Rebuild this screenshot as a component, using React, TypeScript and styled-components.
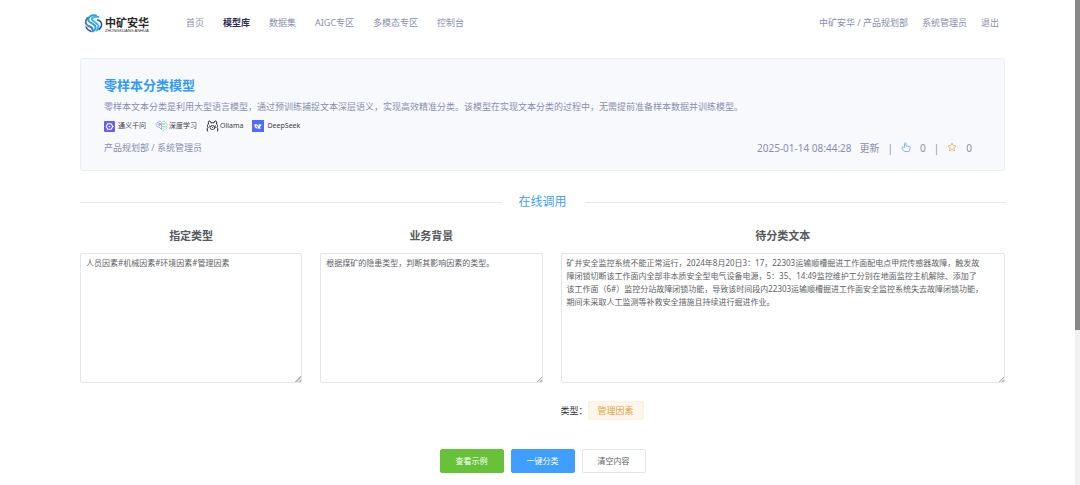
import React from 'react';
import styled, { createGlobalStyle, css } from 'styled-components';

const GlobalStyle = createGlobalStyle`
  *, *::before, *::after { box-sizing: border-box; }
  body {
    margin: 0;
    background: #fff;
    color: #606266;
    font-family: "Noto Sans", "Noto Sans CJK SC", sans-serif;
    font-size: 9px;
  }
  h1, h2, h3, p { margin: 0; }
  a { color: inherit; text-decoration: none; }
  button, textarea { font-family: inherit; }
`;

const Page = styled.div`
  padding: 0 75px 12px 80px;
`;

const Header = styled.header`
  display: flex;
  align-items: center;
  height: 46px;
  padding: 0 6px 0 4px;
  color: #8a8eb0;
  line-height: 16px;
`;

const Brand = styled.a`
  display: flex;
  align-items: center;
  gap: 2px;
  width: 102px;
  color: #2a2829;
`;

const BrandText = styled.span`
  display: flex;
  flex-direction: column;
  padding-top: 2px;
`;

const BrandName = styled.span`
  font-size: 11px;
  font-weight: 700;
  line-height: 13px;
`;

const BrandLatin = styled.span`
  font-family: "Liberation Sans", sans-serif;
  font-size: 4px;
  line-height: 4px;
  white-space: nowrap;
`;

const Nav = styled.nav`
  display: flex;
  flex: 1;
  gap: 19px;
`;

const NavLink = styled.a<{ $active?: boolean }>`
  ${({ $active }) =>
    $active &&
    css`
      color: #2f2b57;
      font-weight: 700;
    `}
`;

const Account = styled.div`
  display: flex;
  gap: 14px;
`;

const Card = styled.section`
  margin-top: 12px;
  padding: 15px 32px 12px 23px;
  border: 1px solid #ebeef5;
  border-radius: 3px;
  background: #f8f9fd;
  color: #8a8eb0;
`;

const Title = styled.h1`
  color: #2f9bff;
  font-size: 13px;
  line-height: 22px;
`;

const Description = styled.p`
  line-height: 22px;
`;

const Tags = styled.ul`
  display: flex;
  gap: 9px;
  margin: 0;
  padding: 0;
  list-style: none;
  color: #3d3f46;
  font-size: 7px;
  line-height: 16px;
`;

const TagItem = styled.li<{ $tight?: boolean }>`
  display: flex;
  align-items: center;
  gap: ${({ $tight }) => ($tight ? 1 : 3)}px;
`;

const CardFooter = styled.div`
  display: flex;
  justify-content: space-between;
  margin-top: 4px;
  line-height: 20px;
`;

const Meta = styled.div`
  display: flex;
  align-items: center;
  gap: 8px;
  font-size: 10px;
`;

const IconButton = styled.button`
  display: flex;
  align-items: center;
  gap: 9px;
  padding: 0;
  border: 0;
  background: none;
  color: inherit;
  font-size: 10px;
  line-height: 20px;
`;

const Divider = styled.h2`
  display: flex;
  align-items: center;
  gap: 18px;
  margin-top: 21px;
  color: #409eff;
  font-size: 12px;
  font-weight: 400;
  line-height: 20px;

  &::before, &::after {
    content: "";
    flex: 1;
    height: 1px;
    background: #e6e8ec;
  }
`;

const Form = styled.form`
  display: grid;
  grid-template-columns: 1fr 1fr 2fr;
  column-gap: 18px;
  margin-top: 14px;
`;

const Field = styled.label`
  display: flex;
  flex-direction: column;
  gap: 7px;
  min-width: 0;
`;

const FieldTitle = styled.span`
  color: #55585e;
  font-size: 11px;
  font-weight: 700;
  line-height: 20px;
  text-align: center;
`;

const TextArea = styled.textarea`
  display: block;
  width: 100%;
  height: 130px;
  padding: 2px 20px 2px 5px;
  border: 1px solid #e2e5ec;
  border-radius: 2px;
  outline: 0;
  background: #fff;
  color: #606266;
  font-size: 8px;
  line-height: 13px;
  resize: vertical;

  &::-webkit-resizer {
    background: linear-gradient(135deg, transparent 50%, #b4b4b4 50%, #b4b4b4 64%, #e4e4e4 64%, #e4e4e4 78%, #b4b4b4 78%)
      right bottom / 6px 6px no-repeat;
  }
`;

const Result = styled.div`
  display: flex;
  grid-column: 3;
  align-items: center;
  margin-top: 18px;
  color: #303133;
  line-height: 17px;
`;

const ResultTag = styled.output`
  padding: 0 9px;
  border: 1px solid #fcf0df;
  border-radius: 2px;
  background: #fdf6ec;
  color: #e6a23c;
`;

const Actions = styled.div`
  display: flex;
  grid-column: 1 / -1;
  justify-content: center;
  gap: 7px;
  margin-top: 29px;
`;

const tones = {
  success: ['#67c23a', '#67c23a', '#fff'],
  primary: ['#409eff', '#409eff', '#fff'],
  plain: ['#fff', '#e2e5ec', '#606266'],
};

const Button = styled.button<{ $tone: keyof typeof tones }>`
  width: 64px;
  height: 24px;
  padding: 0;
  border: 1px solid ${({ $tone }) => tones[$tone][1]};
  border-radius: 2px;
  background: ${({ $tone }) => tones[$tone][0]};
  color: ${({ $tone }) => tones[$tone][2]};
  font-size: 8px;
  line-height: 16px;
`;

const ScrollTrack = styled.div`
  position: fixed;
  top: 0;
  right: 0;
  bottom: 0;
  width: 5px;
  background: #f1f1f1;
`;

const ScrollThumb = styled.div`
  height: 68%;
  background: #888;
`;

const Logo = () => (
  <svg width="19" height="19" viewBox="0 0 38 38" fill="none" strokeLinecap="round" aria-hidden="true">
    <path d="M24 3C13 1 7 7 9 13c2 6 13 6 14 13 1 4-2 7-5 9" stroke="#2f9fe0" strokeWidth="4" />
    <path d="M7 8C1 15 3 22 9 24c5 2 9 3 8 8" stroke="#3f7fd0" strokeWidth="4" />
    <path d="M29 6c-8-1-14 1-13 5 1 5 12 6 13 13 0 4-1 6-4 9" stroke="#35bde8" strokeWidth="4" />
    <path d="M27 12c6 1 9 6 8 11-1 4-3 6-5 8" stroke="#1d4f9e" strokeWidth="3" />
    <path d="M4 26c2 5 5 7 10 9" stroke="#2c50a8" strokeWidth="3" />
  </svg>
);

const QwenIcon = () => (
  <svg width="11" height="11" viewBox="0 0 20 20" aria-hidden="true">
    <rect width="20" height="20" rx="2" fill="#6a5cf0" />
    <path d="M7 5h6l3 5-3 5H7l-3-5z" fill="none" stroke="#fff" strokeWidth="2" strokeLinejoin="round" />
    <path d="M8 9h4l-2 3z" fill="#fff" />
    <path d="M7 5L5 3M16 10h2M7 15l-1 2" stroke="#fff" />
  </svg>
);

const DeepLearningIcon = () => (
  <svg width="13" height="12" viewBox="0 0 26 24" fill="none" strokeWidth="1.5" aria-hidden="true">
    <path d="M12 3C8 1 6 4 6 5 2 5 1 9 3 11c0 3 3 3 5 3l5 5V5M5 8h5l3 3M8 5l2 3M7 11h3" stroke="#8d9bb4" />
    <path d="M14 3c4-2 6 0 7 3 4 1 4 5 2 7 1 4-1 6-4 6-1 3-4 3-5 1M14 8h4l3-2M14 13h4l4 1M15 18l4-3" stroke="#86dbb5" />
    <circle cx="10" cy="8" r="1" stroke="#70a9dc" />
    <circle cx="18" cy="8" r="1" stroke="#86dbb5" />
  </svg>
);

const OllamaIcon = () => (
  <svg width="13" height="12" viewBox="0 0 26 24" fill="none" stroke="#17171a" strokeWidth="2" strokeLinecap="round" aria-hidden="true">
    <path d="M3 22c-1-3-1-5 1-7-2-3-1-6 1-7C4 4 5 2 7 2c2 0 3 2 3 4 2-1 4-1 6 0 0-2 1-4 3-4s3 2 2 6c2 1 3 4 1 7 2 2 2 4 1 7" />
    <ellipse cx="13" cy="15" rx="5" ry="4" strokeWidth="1.5" />
    <path d="M12 14l1 1 1-1M7 12h.1M19 12h.1" strokeWidth="2" />
  </svg>
);

const DeepSeekIcon = () => (
  <svg width="12" height="12" viewBox="0 0 24 24" aria-hidden="true">
    <rect width="24" height="24" fill="#4d6bfe" />
    <path d="M5 9c3-2 6 0 8 3 1-2 0-3 1-4 1 1 3 1 5 0 0 4-2 4-3 6 0 2 1 2 2 3-3 1-4 0-5 0-5 1-9-2-8-8z" fill="#fff" />
    <path d="M8 11c2 0 4 2 4 4-2 0-4-1-4-4z" fill="#4d6bfe" />
  </svg>
);

const ThumbIcon = () => (
  <svg width="10" height="12" viewBox="0 0 20 24" fill="none" stroke="#5aabff" strokeWidth="1.6" strokeLinejoin="round" aria-hidden="true">
    <path d="M7 11V3c0-2 3-2 3 0v5l6 1c2 0 3 1 2 3l-1 5c0 1-1 2-2 2H8c-2 0-3-1-4-3l-2-4c-1-2 2-3 3-2l2 2" />
  </svg>
);

const StarIcon = () => (
  <svg width="10" height="12" viewBox="0 0 20 24" fill="none" stroke="#ecb45c" strokeWidth="1.8" strokeLinejoin="round" aria-hidden="true">
    <path d="M10 2l2.5 5.2 5.6.8-4 4 .9 5.8-5-2.8-5 2.8.9-5.8-4-4 5.6-.8z" />
  </svg>
);

const navItems = ['首页', '模型库', '数据集', 'AIGC专区', '多模态专区', '控制台'];

const tags = [
  { name: '通义千问', icon: <QwenIcon /> },
  { name: '深度学习', icon: <DeepLearningIcon />, tight: true },
  { name: 'Ollama', icon: <OllamaIcon />, tight: true },
  { name: 'DeepSeek', icon: <DeepSeekIcon /> },
];

const fields = [
  { title: '指定类型', value: '人员因素#机械因素#环境因素#管理因素' },
  { title: '业务背景', value: '根据煤矿的隐患类型，判断其影响因素的类型。' },
  {
    title: '待分类文本',
    value:
      '矿井安全监控系统不能正常运行，2024年8月20日3：17，22303运输顺槽掘进工作面配电点甲烷传感器故障，触发故障闭锁切断该工作面内全部非本质安全型电气设备电源，5：35、14:49监控维护工分别在地面监控主机解除、添加了该工作面（6#）监控分站故障闭锁功能，导致该时间段内22303运输顺槽掘进工作面安全监控系统失去故障闭锁功能，期间未采取人工监测等补救安全措施且持续进行掘进作业。',
  },
];

export default function App() {
  return (
    <>
      <GlobalStyle />
      <Page>
        <Header>
          <Brand href="#">
            <Logo />
            <BrandText>
              <BrandName>中矿安华</BrandName>
              <BrandLatin>ZHONGKUANG ANHUA</BrandLatin>
            </BrandText>
          </Brand>
          <Nav>
            {navItems.map((item) => (
              <NavLink key={item} href="#" $active={item === '模型库'}>
                {item}
              </NavLink>
            ))}
          </Nav>
          <Account>
            <span>中矿安华 / 产品规划部</span>
            <span>系统管理员</span>
            <a href="#">退出</a>
          </Account>
        </Header>

        <main>
          <Card>
            <Title>零样本分类模型</Title>
            <Description>
              零样本文本分类是利用大型语言模型，通过预训练捕捉文本深层语义，实现高效精准分类。该模型在实现文本分类的过程中，无需提前准备样本数据并训练模型。
            </Description>
            <Tags>
              {tags.map((tag) => (
                <TagItem key={tag.name} $tight={tag.tight}>
                  {tag.icon}
                  {tag.name}
                </TagItem>
              ))}
            </Tags>
            <CardFooter>
              <span>产品规划部 / 系统管理员</span>
              <Meta>
                <time>2025-01-14 08:44:28</time>
                <span>更新</span>
                <span>|</span>
                <IconButton type="button" aria-label="点赞">
                  <ThumbIcon />0
                </IconButton>
                <span>|</span>
                <IconButton type="button" aria-label="收藏">
                  <StarIcon />0
                </IconButton>
              </Meta>
            </CardFooter>
          </Card>

          <Divider>在线调用</Divider>

          <Form>
            {fields.map((field) => (
              <Field key={field.title}>
                <FieldTitle>{field.title}</FieldTitle>
                <TextArea defaultValue={field.value} spellCheck={false} />
              </Field>
            ))}
            <Result>
              <span>类型：</span>
              <ResultTag>管理因素</ResultTag>
            </Result>
            <Actions>
              <Button type="button" $tone="success">查看示例</Button>
              <Button type="button" $tone="primary">一键分类</Button>
              <Button type="button" $tone="plain">清空内容</Button>
            </Actions>
          </Form>
        </main>
      </Page>
      <ScrollTrack>
        <ScrollThumb />
      </ScrollTrack>
    </>
  );
}
